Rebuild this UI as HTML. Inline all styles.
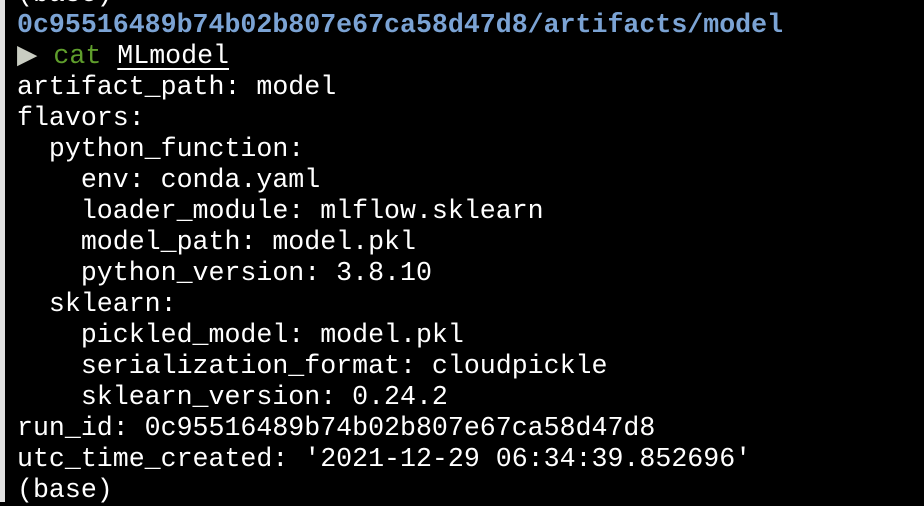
<!DOCTYPE html>
<html><head><meta charset="utf-8"><style>
html,body{margin:0;padding:0;width:924px;height:502px;overflow:hidden;background:#000;}
.strip{position:absolute;left:0;top:0;width:5px;height:502px;background:#e2e2e2;}
.t{position:absolute;left:17px;top:-21px;font-family:"Liberation Mono",monospace;font-size:26.6px;line-height:31px;color:#fff;white-space:pre;}
.b{color:#7ba3d4;font-weight:bold;}
.g{color:#5f9e2c;}
.tri{color:#c9cdc2;}
.u{text-decoration:underline;text-underline-offset:5px;text-decoration-thickness:2px;}
</style></head><body>
<div class="strip"></div>
<div class="t">(base)
<span class="b">0c95516489b74b02b807e67ca58d47d8/artifacts/model</span>
<span class="tri">▶</span> <span class="g">cat</span> <span class="u">MLmodel</span>
artifact_path: model
flavors:
  python_function:
    env: conda.yaml
    loader_module: mlflow.sklearn
    model_path: model.pkl
    python_version: 3.8.10
  sklearn:
    pickled_model: model.pkl
    serialization_format: cloudpickle
    sklearn_version: 0.24.2
run_id: 0c95516489b74b02b807e67ca58d47d8
utc_time_created: '2021-12-29 06:34:39.852696'
(base)</div>
</body></html>
